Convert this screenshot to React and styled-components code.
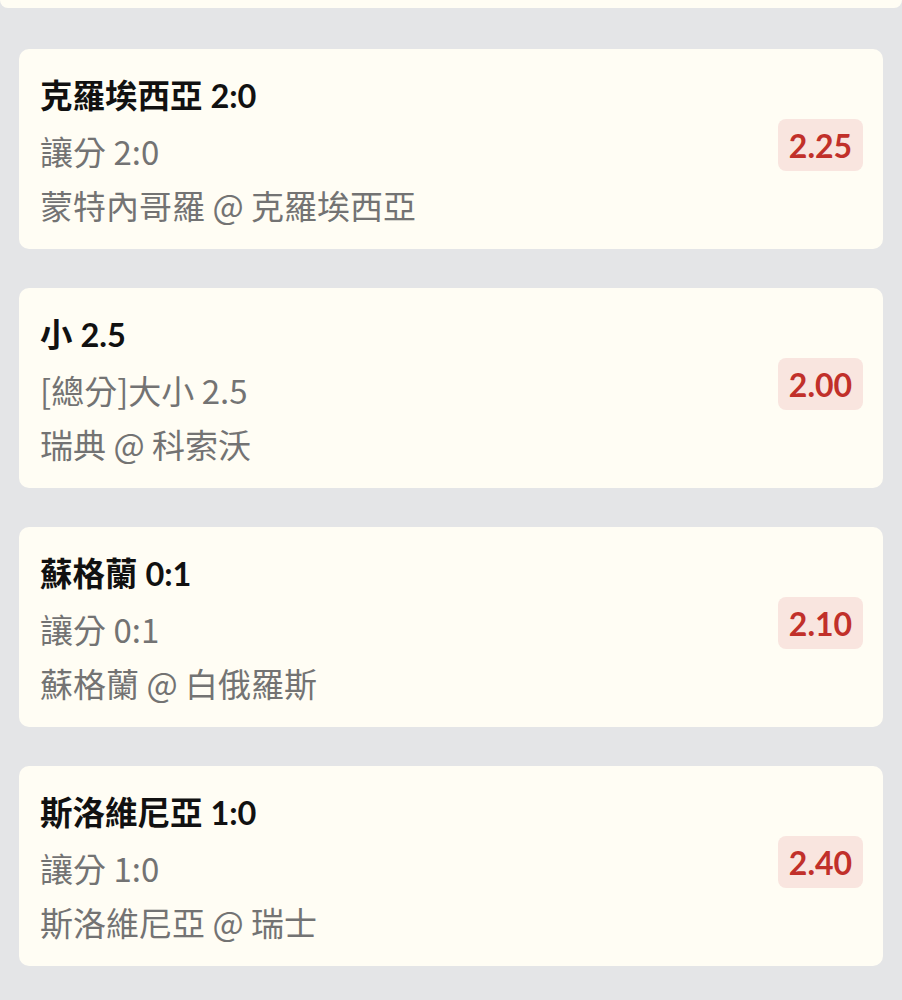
import React from 'react'
import styled, { createGlobalStyle } from 'styled-components'

const GlobalStyle = createGlobalStyle`
  html, body {
    margin: 0;
    padding: 0;
    background: #e4e5e7;
  }
  body {
    font-family: Lato, "Noto Sans CJK TC", sans-serif;
  }
`

const bets = [
  { title: '克羅埃西亞 2:0', market: '讓分 2:0', match: '蒙特內哥羅 @ 克羅埃西亞', odds: '2.25' },
  { title: '小 2.5', market: '[總分]大小 2.5', match: '瑞典 @ 科索沃', odds: '2.00' },
  { title: '蘇格蘭 0:1', market: '讓分 0:1', match: '蘇格蘭 @ 白俄羅斯', odds: '2.10' },
  { title: '斯洛維尼亞 1:0', market: '讓分 1:0', match: '斯洛維尼亞 @ 瑞士', odds: '2.40' },
]

const App = () => {
  return (
    <>
      <GlobalStyle />
      <Page>
        <TopEdge />
        <List>
          {bets.map((bet) => (
            <Card key={bet.title}>
              <Info>
                <Title>{bet.title}</Title>
                <Line>{bet.market}</Line>
                <Line>{bet.match}</Line>
              </Info>
              <Odds>{bet.odds}</Odds>
            </Card>
          ))}
        </List>
      </Page>
    </>
  )
}

const Page = styled.main`
  min-height: 1000px;
  background: #e4e5e7;
  display: flex;
  flex-direction: column;
`

const TopEdge = styled.div`
  height: 8px;
  background: #fffdf4;
  border-radius: 0 0 10px 10px;
`

const List = styled.div`
  display: flex;
  flex-direction: column;
  gap: 39px;
  padding: 41px 19px 0 19px;
`

const Card = styled.div`
  height: 200px;
  box-sizing: border-box;
  background: #fffdf4;
  border-radius: 10px;
  padding: 0 20px 0 21px;
  display: flex;
  align-items: center;
  justify-content: space-between;
`

const Info = styled.div`
  display: flex;
  flex-direction: column;
  margin-top: 2px;
`

const Title = styled.div`
  font-family: Lato, "Noto Sans CJK TC", sans-serif;
  font-size: 32.5px;
  line-height: 56px;
  font-weight: 700;
  color: #111111;
`

const Line = styled.div`
  font-family: "Noto Sans CJK TC", sans-serif;
  font-size: 33px;
  line-height: 54px;
  color: #737373;
`

const Odds = styled.div`
  width: 85px;
  height: 52px;
  margin-top: -8px;
  border-radius: 8px;
  background: #f9e5df;
  color: #c1302a;
  font-size: 32px;
  font-weight: 700;
  display: flex;
  align-items: center;
  justify-content: center;
`

export default App
